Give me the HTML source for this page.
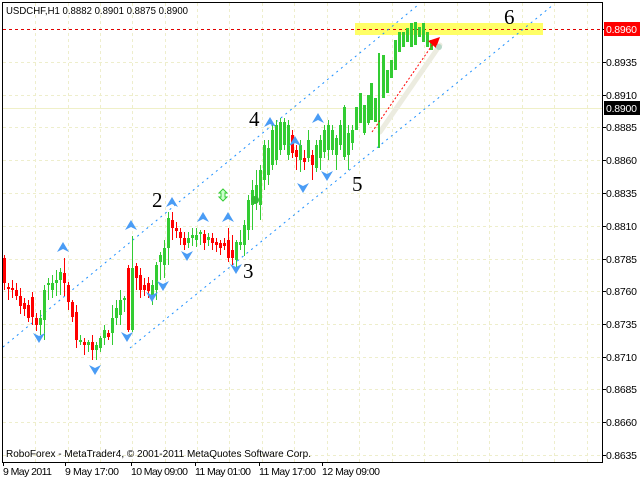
<!DOCTYPE html>
<html><head><meta charset="utf-8"><style>
html,body{margin:0;padding:0;background:#fff;width:640px;height:480px;overflow:hidden}
svg{display:block;font-family:"Liberation Sans",sans-serif}
</style></head><body>
<svg width="640" height="480" viewBox="0 0 640 480" xmlns="http://www.w3.org/2000/svg">
<rect width="640" height="480" fill="#fff"/>
<g stroke="#eeeecc" stroke-width="1" stroke-dasharray="3,3" fill="none">
<path d="M35.5 3V462M68.5 3V462M100.5 3V462M132.5 3V462M165.5 3V462M197.5 3V462M229.5 3V462M262.5 3V462M294.5 3V462M327.5 3V462M359.5 3V462M392.5 3V462M424.5 3V462M457.5 3V462M489.5 3V462M522.5 3V462M554.5 3V462M587.5 3V462"/>
<path d="M3 29.5H602M3 62.5H602M3 95.5H602M3 127.5H602M3 160.5H602M3 193.5H602M3 226.5H602M3 259.5H602M3 291.5H602M3 324.5H602M3 357.5H602M3 389.5H602M3 422.5H602M3 455.5H602"/>
</g>
<path d="M3 108.5H602" stroke="#f0f0c8" stroke-width="1"/>
<rect x="355" y="23" width="188" height="12" fill="#ffff66"/>
<path d="M3 29.5H602" stroke="#e00000" stroke-width="1" stroke-dasharray="3,3"/>
<g stroke="#1e90ff" stroke-width="1" stroke-dasharray="2,4" fill="none">
<path d="M3 347L418 5"/>
<path d="M130 348L553 5"/>
</g>
<path d="M380 132L440 45" stroke="#ecece0" stroke-width="5" stroke-linecap="round"/>
<g stroke-width="1" fill="none">
<path stroke="#ff0000" d="M4.5 255V290M8.5 283V300M12.5 280V298M16.5 283V300M20.5 288V314M24.5 298V316M28.5 300V322M32.5 292V325M36.5 313V331M64.5 258V296M68.5 282V310M72.5 300V322M76.5 305V348M84.5 338V355M92.5 335V360M108.5 330V340M128.5 265V332M136.5 263V290M140.5 268V298M144.5 278V296M148.5 277V298M172.5 212V240M176.5 222V238M180.5 228V245M184.5 232V250M204.5 230V250M212.5 233V250M216.5 238V252M220.5 240V255M224.5 238V250M228.5 228V262M232.5 235V265M292.5 130V158M296.5 145V170M304.5 150V170M312.5 150V180"/>
<path stroke="#33cc33" d="M40.5 310V335M44.5 285V340M48.5 278V300M52.5 275V298M56.5 270V296M60.5 268V295M80.5 335V345M88.5 340V352M96.5 342V360M100.5 336V352M104.5 325V345M112.5 305V345M116.5 300V325M120.5 290V325M124.5 296V312M132.5 236V332M152.5 280V305M156.5 262V300M160.5 252V280M164.5 240V278M168.5 212V265M188.5 232V248M192.5 228V246M196.5 228V247M200.5 230V245M208.5 233V246M236.5 240V268M240.5 230V250M244.5 220V256M248.5 195V240M252.5 180V230M256.5 170V210M260.5 165V220M264.5 140V190M268.5 140V185M272.5 125V170M276.5 120V165M280.5 118V155M284.5 118V150M288.5 120V160M300.5 140V172M308.5 130V162M316.5 140V172M320.5 135V170M324.5 125V158M328.5 120V160M332.5 125V155M336.5 135V170M340.5 120V150M344.5 105V160M348.5 125V170M352.5 125V150M356.5 107V130M360.5 93V123M364.5 105V135M368.5 95V125M371.5 83V120M375.5 98V122M379.5 53V148M383.5 55V98M387.5 70V93M391.5 60V78M395.5 40V70M399.5 32V52M403.5 32V47M407.5 28V42M411.5 23V47M415.5 22V45M419.5 27V37M423.5 23V42M427.5 32V47M431.5 40V50"/>
</g>
<g fill="#ff0000">
<rect x="3" y="258" width="3" height="25"/><rect x="7" y="287" width="3" height="2"/><rect x="11" y="288" width="3" height="2"/><rect x="15" y="290" width="3" height="6"/><rect x="19" y="296" width="3" height="10"/><rect x="23" y="303" width="3" height="6"/><rect x="27" y="305" width="3" height="13"/><rect x="31" y="297" width="3" height="20"/><rect x="35" y="318" width="3" height="7"/>
<rect x="63" y="273" width="3" height="10"/><rect x="67" y="285" width="3" height="17"/><rect x="71" y="302" width="3" height="15"/><rect x="75" y="312" width="3" height="28"/><rect x="83" y="342" width="3" height="3"/><rect x="91" y="342" width="3" height="8"/><rect x="107" y="333" width="3" height="4"/>
<rect x="127" y="268" width="3" height="62"/><rect x="135" y="266" width="3" height="12"/><rect x="139" y="275" width="3" height="15"/><rect x="143" y="285" width="3" height="5"/><rect x="147" y="283" width="3" height="8"/>
<rect x="171" y="220" width="3" height="8"/><rect x="175" y="228" width="3" height="3"/><rect x="179" y="232" width="3" height="6"/><rect x="183" y="238" width="3" height="7"/><rect x="203" y="234" width="3" height="9"/><rect x="211" y="238" width="3" height="5"/><rect x="215" y="242" width="3" height="3"/><rect x="219" y="243" width="3" height="5"/><rect x="223" y="243" width="3" height="3"/><rect x="227" y="240" width="3" height="18"/><rect x="231" y="250" width="3" height="8"/>
<rect x="291" y="135" width="3" height="18"/><rect x="295" y="150" width="3" height="7"/><rect x="303" y="158" width="3" height="4"/><rect x="311" y="155" width="3" height="10"/>
</g>
<g fill="#33cc33">
<rect x="39" y="318" width="3" height="7"/><rect x="43" y="290" width="3" height="30"/><rect x="47" y="283" width="3" height="2"/><rect x="51" y="283" width="3" height="7"/><rect x="55" y="280" width="3" height="3"/><rect x="59" y="272" width="3" height="8"/>
<rect x="79" y="340" width="3" height="2"/><rect x="87" y="342" width="3" height="3"/><rect x="95" y="345" width="3" height="5"/><rect x="99" y="338" width="3" height="10"/><rect x="103" y="330" width="3" height="8"/><rect x="111" y="318" width="3" height="15"/><rect x="115" y="308" width="3" height="10"/><rect x="119" y="300" width="3" height="15"/><rect x="123" y="298" width="3" height="2"/><rect x="131" y="268" width="3" height="62"/>
<rect x="151" y="285" width="3" height="13"/><rect x="155" y="265" width="3" height="25"/><rect x="159" y="255" width="3" height="7"/><rect x="163" y="248" width="3" height="17"/><rect x="167" y="218" width="3" height="30"/>
<rect x="187" y="238" width="3" height="5"/><rect x="191" y="235" width="3" height="3"/><rect x="195" y="235" width="3" height="5"/><rect x="199" y="232" width="3" height="2"/><rect x="207" y="237" width="3" height="3"/>
<rect x="235" y="242" width="3" height="18"/><rect x="239" y="242" width="3" height="3"/><rect x="243" y="225" width="3" height="20"/><rect x="247" y="200" width="3" height="30"/><rect x="251" y="190" width="3" height="15"/><rect x="255" y="185" width="3" height="15"/><rect x="259" y="170" width="3" height="35"/><rect x="263" y="145" width="3" height="35"/><rect x="267" y="148" width="3" height="27"/><rect x="271" y="130" width="3" height="35"/><rect x="275" y="125" width="3" height="35"/><rect x="279" y="122" width="3" height="28"/><rect x="283" y="122" width="3" height="23"/><rect x="287" y="125" width="3" height="30"/>
<rect x="299" y="145" width="3" height="15"/><rect x="307" y="140" width="3" height="18"/><rect x="315" y="145" width="3" height="23"/><rect x="319" y="140" width="3" height="18"/><rect x="323" y="130" width="3" height="22"/><rect x="327" y="125" width="3" height="25"/><rect x="331" y="130" width="3" height="20"/><rect x="335" y="138" width="3" height="17"/><rect x="339" y="125" width="3" height="20"/><rect x="343" y="107" width="3" height="50"/><rect x="347" y="133" width="3" height="22"/><rect x="351" y="130" width="3" height="13"/><rect x="355" y="107" width="3" height="23"/><rect x="359" y="93" width="3" height="30"/><rect x="363" y="105" width="3" height="28"/><rect x="367" y="95" width="3" height="28"/><rect x="370" y="83" width="3" height="37"/><rect x="374" y="98" width="3" height="24"/><rect x="378" y="53" width="2" height="95"/><rect x="382" y="55" width="3" height="43"/><rect x="386" y="70" width="3" height="23"/><rect x="390" y="60" width="3" height="18"/><rect x="394" y="40" width="3" height="30"/><rect x="398" y="32" width="3" height="20"/><rect x="402" y="32" width="3" height="15"/><rect x="406" y="28" width="3" height="14"/><rect x="410" y="23" width="3" height="24"/><rect x="414" y="22" width="3" height="23"/><rect x="418" y="27" width="3" height="10"/><rect x="422" y="23" width="3" height="19"/><rect x="426" y="32" width="3" height="15"/><rect x="430" y="40" width="3" height="10"/>
</g>
<path d="M372 132L433 44" stroke="#ff0000" stroke-width="1" stroke-dasharray="2,2"/>
<path d="M440 37L428 41L436 48Z" fill="#ff0000"/>
<circle cx="439" cy="47" r="3" fill="#b8d8c8"/>
<g fill="#4a9cf5">
<path d="M63 242l6 10-6-3-6 3z"/><path d="M131 220l6 10-6-3-6 3z"/><path d="M172 197l6 10-6-3-6 3z"/><path d="M203 212l6 10-6-3-6 3z"/><path d="M228 212l6 10-6-3-6 3z"/><path d="M270 117l6 10-6-3-6 3z"/><path d="M295 136l6 10-6-3-6 3z"/><path d="M318 113l6 10-6-3-6 3z"/>
<path d="M39 343l6-10-6 3-6-3z"/><path d="M95 375l6-10-6 3-6-3z"/><path d="M127 342l6-10-6 3-6-3z"/><path d="M152 302l6-10-6 3-6-3z"/><path d="M163 291l6-10-6 3-6-3z"/><path d="M187 261l6-10-6 3-6-3z"/><path d="M236 274l6-10-6 3-6-3z"/><path d="M303 193l6-10-6 3-6-3z"/><path d="M327 181l6-10-6 3-6-3z"/>
</g>
<path d="M223 189l4 4h-2v4h2l-4 4-4-4h2v-4h-2z" fill="#ccffcc" stroke="#33cc33" stroke-width="1"/>
<circle cx="255" cy="200" r="4" fill="#33bb33"/>
<g font-family="Liberation Serif,serif" font-size="21" fill="#000">
<text x="152" y="207">2</text><text x="243" y="278">3</text><text x="249" y="126">4</text><text x="352" y="191">5</text><text x="504" y="24">6</text>
</g>
<path d="M2.5 2V462.5H602.5V2" stroke="#000" fill="none"/>
<path d="M2 2.5H602" stroke="#000"/>
<g stroke="#000"><path d="M602 29.5h4M602 62.5h4M602 95.5h4M602 127.5h4M602 160.5h4M602 193.5h4M602 226.5h4M602 259.5h4M602 291.5h4M602 324.5h4M602 357.5h4M602 389.5h4M602 422.5h4M602 455.5h4"/>
<path d="M3.5 462v4M65.5 462v4M131.5 462v4M195.5 462v4M259.5 462v4M322.5 462v4"/></g>
<rect x="604" y="22" width="36" height="14" fill="#ff0000"/>
<rect x="604" y="101" width="36" height="14" fill="#000"/>
<g font-size="10.5" fill="#000">
<text x="6" y="14" textLength="182" lengthAdjust="spacingAndGlyphs">USDCHF,H1  0.8882 0.8901 0.8875 0.8900</text>
<text x="6" y="457" textLength="305" lengthAdjust="spacingAndGlyphs">RoboForex - MetaTrader4, © 2001-2011 MetaQuotes Software Corp.</text>
</g>
<g font-size="10.5" fill="#000" lengthAdjust="spacingAndGlyphs">
<text x="606" y="33" fill="#fff" textLength="31">0.8960</text>
<text x="606" y="66" textLength="31">0.8935</text><text x="606" y="99" textLength="31">0.8910</text>
<text x="606" y="112" fill="#fff" textLength="31">0.8900</text>
<text x="606" y="131" textLength="31">0.8885</text><text x="606" y="164" textLength="31">0.8860</text><text x="606" y="197" textLength="31">0.8835</text><text x="606" y="230" textLength="31">0.8810</text><text x="606" y="263" textLength="31">0.8785</text><text x="606" y="295" textLength="31">0.8760</text><text x="606" y="328" textLength="31">0.8735</text><text x="606" y="361" textLength="31">0.8710</text><text x="606" y="393" textLength="31">0.8685</text><text x="606" y="426" textLength="31">0.8660</text><text x="606" y="459" textLength="31">0.8635</text>
<text x="3" y="475" textLength="49">9 May 2011</text><text x="65" y="475" textLength="54">9 May 17:00</text><text x="131" y="475" textLength="57">10 May 09:00</text><text x="195" y="475" textLength="56">11 May 01:00</text><text x="259" y="475" textLength="57">11 May 17:00</text><text x="322" y="475" textLength="58">12 May 09:00</text>
</g>
</svg>
</body></html>
